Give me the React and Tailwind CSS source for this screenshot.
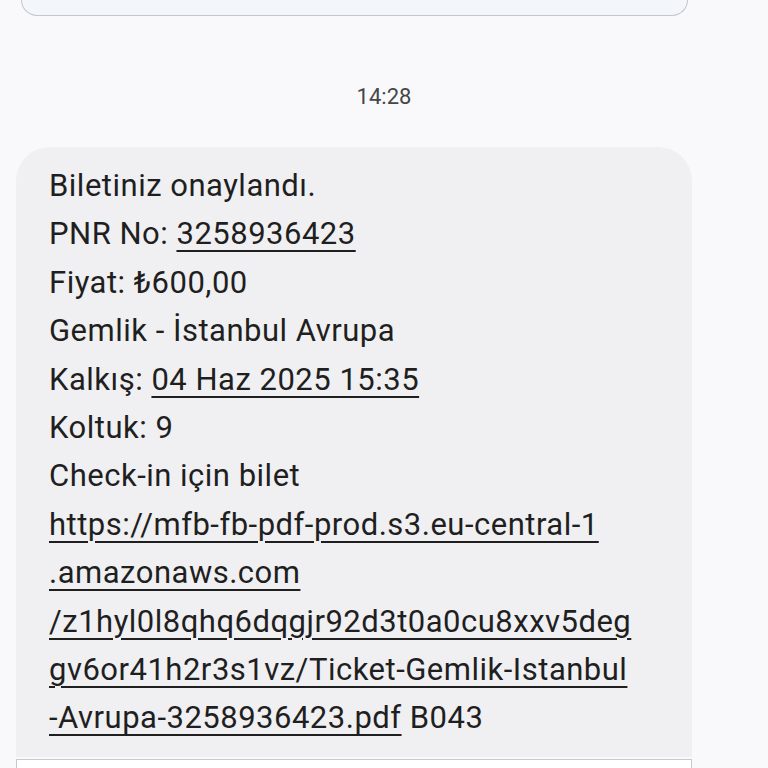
import React from "react";

const Link = ({ children }) => (
  <span className="underline decoration-2 underline-offset-[6px]">{children}</span>
);

const lines = [
  ["Biletiniz onaylandı."],
  ["PNR No: ", <Link key="p">3258936423</Link>],
  ["Fiyat: ₺600,00"],
  ["Gemlik - İstanbul Avrupa"],
  ["Kalkış: ", <Link key="k">04 Haz 2025 15:35</Link>],
  ["Koltuk: 9"],
  ["Check-in için bilet"],
  [<Link key="u1">https://mfb-fb-pdf-prod.s3.eu-central-1</Link>],
  [<Link key="u2">.amazonaws.com</Link>],
  [<Link key="u3">/z1hyl0l8qhq6dqgjr92d3t0a0cu8xxv5deg</Link>],
  [<Link key="u4">gv6or41h2r3s1vz/Ticket-Gemlik-Istanbul</Link>],
  [<Link key="u5">-Avrupa-3258936423.pdf</Link>, " B043"],
];

export default function App() {
  return (
    <div
      className="w-[768px] h-[768px] overflow-hidden bg-[#f9f9fc] text-[#1f1f1f]"
      style={{ fontFamily: "Roboto, 'Noto Sans', sans-serif" }}
    >
      {/* Previous message bubble (cut off at top) */}
      <div className="ml-[21px] mr-[80px] h-[16px] rounded-b-[30px] border border-t-0 border-[#c3c6cc] bg-[#f3f7fb]"></div>

      {/* Timestamp */}
      <div className="h-[131px] pt-[68px] text-center">
        <span className="text-[22px] leading-[26px] text-[#444746]">14:28</span>
      </div>

      {/* Message bubble */}
      <div className="ml-[16px] mr-[76px] rounded-t-[34px] bg-[#f0f0f2] pl-[33px] pr-4 pt-[15px] pb-[14px]">
        {lines.map((parts, i) => (
          <div key={i} className="h-[48.4px] leading-[48px] text-[31px] tracking-[0.5px] whitespace-nowrap">
            {parts}
          </div>
        ))}
      </div>

      {/* Next bubble */}
      <div className="ml-[16px] mr-[76px] mt-[2px] h-[40px] border border-[#c7c9cc] bg-white"></div>
    </div>
  );
}
